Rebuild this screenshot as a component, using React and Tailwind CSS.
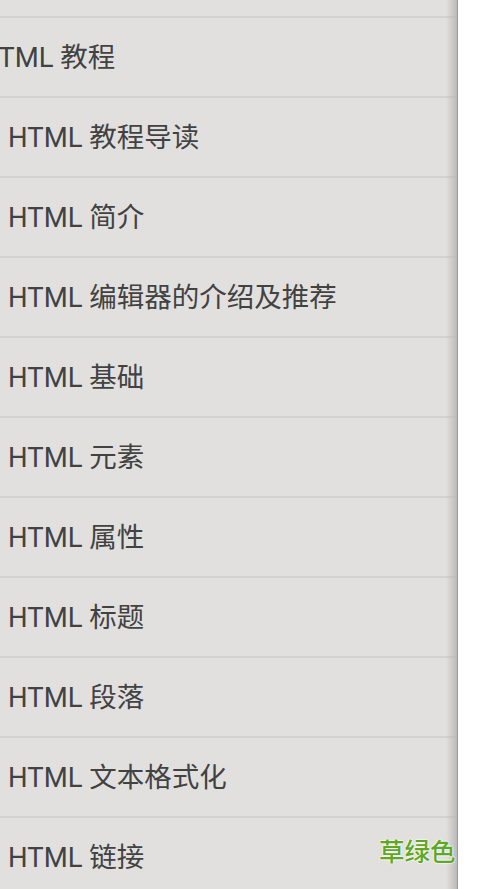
import React from 'react';

const items = [
  { label: '', level: 0 },
  { label: 'HTML 教程', level: 0 },
  { label: 'HTML 教程导读', level: 1 },
  { label: 'HTML 简介', level: 1 },
  { label: 'HTML 编辑器的介绍及推荐', level: 1 },
  { label: 'HTML 基础', level: 1 },
  { label: 'HTML 元素', level: 1 },
  { label: 'HTML 属性', level: 1 },
  { label: 'HTML 标题', level: 1 },
  { label: 'HTML 段落', level: 1 },
  { label: 'HTML 文本格式化', level: 1 },
  { label: 'HTML 链接', level: 1 },
];

export default function App() {
  return (
    <div className="relative w-[500px] h-[889px] overflow-hidden bg-white flex font-['Roboto','Noto_Sans_CJK_SC',sans-serif]">
      {/* Side menu */}
      <div className="relative w-[458px] h-full bg-[#e1e0df] overflow-hidden">
        <div className="flex flex-col -mt-[62px]">
          {items.map((item, i) => (
            <div
              key={i}
              className="h-20 shrink-0 flex items-center border-b-2 border-[#d3d2d1]"
            >
              <span
                className={
                  item.level === 0
                    ? '-ml-[21px] pt-px text-[27.5px] text-[#424242] whitespace-nowrap'
                    : 'ml-2 pt-px text-[27.5px] text-[#424242] whitespace-nowrap'
                }
              >
                {item.label}
              </span>
            </div>
          ))}
        </div>
        {/* right edge shade */}
        <div className="absolute top-0 right-0 h-full w-3 bg-gradient-to-r from-transparent to-[#b8b7b6]" />
        <div className="absolute top-0 right-0 h-full w-px bg-[#9a9a9a]" />
      </div>

      {/* Watermark */}
      <span className="absolute left-[379px] top-[837px] text-[25.5px] font-medium leading-none text-[#5ea823] [text-shadow:0_0_2px_#fff,0_0_2px_#fff,0_0_1px_#fff] font-['Noto_Sans_CJK_SC',sans-serif]">
        草绿色
      </span>
    </div>
  );
}
